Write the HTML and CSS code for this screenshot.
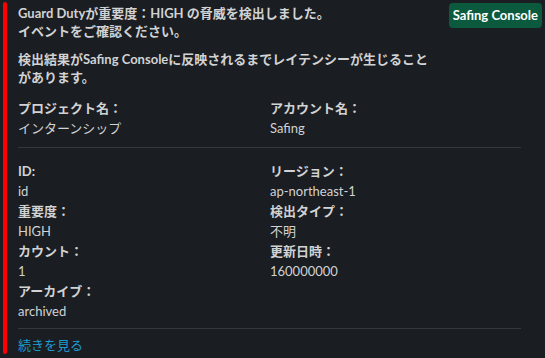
FILE: index.html
```html
<!DOCTYPE html>
<html lang="ja">
<head>
<meta charset="utf-8">
<link rel="stylesheet" href="styles.css">
</head>
<body>
<div class="attachment">
  <div class="bar"></div>
  <div class="content">
    <div class="header">
      <div class="intro">
        <p class="para">Guard Dutyが重要度：HIGH の脅威を検出しました。<br>イベントをご確認ください。</p>
        <p class="para">検出結果がSafing Consoleに反映されるまでレイテンシーが生じること<br>があります。</p>
      </div>
      <div class="badge">Safing Console</div>
    </div>
    <div class="fields first">
      <div class="field"><div class="label">プロジェクト名：</div><div class="value">インターンシップ</div></div>
      <div class="field"><div class="label">アカウント名：</div><div class="value">Safing</div></div>
    </div>
    <div class="divider"></div>
    <div class="fields second">
      <div class="field"><div class="label">ID:</div><div class="value">id</div></div>
      <div class="field"><div class="label">リージョン：</div><div class="value">ap-northeast-1</div></div>
      <div class="field"><div class="label">重要度：</div><div class="value">HIGH</div></div>
      <div class="field"><div class="label">検出タイプ：</div><div class="value">不明</div></div>
      <div class="field"><div class="label">カウント：</div><div class="value">1</div></div>
      <div class="field"><div class="label">更新日時：</div><div class="value">160000000</div></div>
      <div class="field"><div class="label">アーカイブ：</div><div class="value">archived</div></div>
    </div>
    <div class="divider bottom"></div>
    <a class="more" href="#">続きを見る</a>
  </div>
</div>
</body>
</html>
```
FILE: styles.css
```css
html, body {
  margin: 0;
  padding: 0;
  background: #1a1d21;
}
body {
  font-family: Lato, "Noto Sans CJK JP", sans-serif;
  font-size: 13px;
  line-height: 18px;
  color: #d1d2d3;
}
.attachment {
  display: flex;
  padding: 2px 3px 4px 3px;
  gap: 11px;
}
.bar {
  width: 4px;
  flex: none;
  background: #ff0000;
  border-radius: 2px;
}
.content {
  flex: 1;
  display: flex;
  flex-direction: column;
  padding-top: 2px;
}
.header {
  display: flex;
  justify-content: space-between;
  align-items: flex-start;
}
.intro {
  display: flex;
  flex-direction: column;
  gap: 10px;
}
.para {
  margin: 0;
  font-weight: 700;
}
.badge {
  background: #0b5a3e;
  color: #ffffff;
  font-weight: 700;
  border-radius: 4px;
  padding: 0 4px;
  height: 25px;
  line-height: 25px;
  white-space: nowrap;
  margin-top: -1px;
}
.fields {
  display: grid;
  grid-template-columns: 252px 252px;
  line-height: 20px;
}
.fields.first {
  margin-top: 12px;
}
.fields.second {
  margin-top: 13px;
}
.label {
  font-weight: 700;
}
.divider {
  height: 1px;
  background: #35373b;
  width: 503px;
  margin-top: 9px;
}
.divider.bottom {
  margin-top: 7px;
}
.more {
  color: #1d9bd1;
  text-decoration: none;
  margin-top: 7px;
}
```
